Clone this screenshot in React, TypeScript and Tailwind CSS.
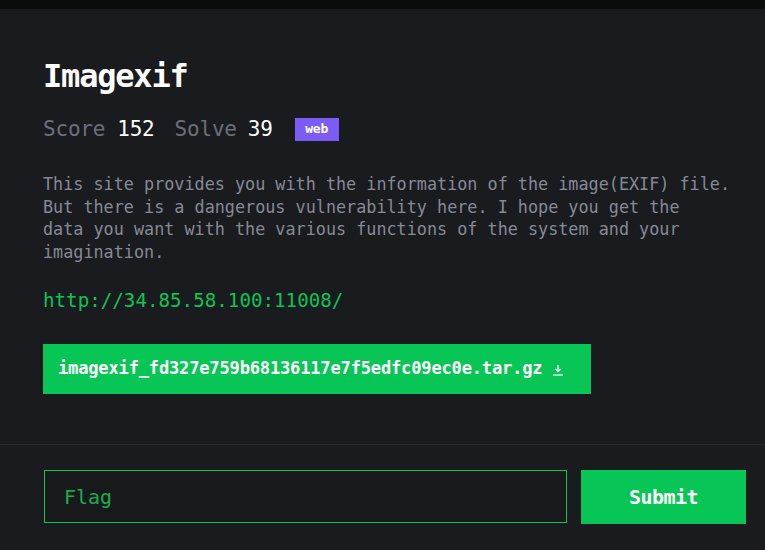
import React from "react";

const mono = { fontFamily: '"DejaVu Sans Mono", "Liberation Mono", monospace' };

const DownloadIcon = () => (
  <svg width="12" height="12" viewBox="0 0 12 12" fill="none" stroke="currentColor" strokeWidth="1.3">
    <path d="M6 1v6.5" />
    <path d="M3.5 5l2.5 2.5L8.5 5" />
    <path d="M1 11h10" />
  </svg>
);

export default function App() {
  const lines = [
    "This site provides you with the information of the image(EXIF) file.",
    "But there is a dangerous vulnerability here. I hope you get the",
    "data you want with the various functions of the system and your",
    "imagination.",
  ];

  return (
    <div className="w-[765px] h-[550px] bg-[#1a1b1e] overflow-hidden" style={mono}>
      <div className="h-[9px] bg-[#0b0b0c]" />
      <div className="px-[43px] pt-[48px] pb-[50px] border-b border-[#2a2b2f]">
        <h1 className="text-[32px] leading-[38px] font-bold text-white tracking-[-1.2px]">Imagexif</h1>
        <div className="mt-[22px] flex items-center h-[24px] text-[21px] leading-[24px] tracking-[-0.2px]">
          <span className="text-[#6c6f79]">Score</span>
          <span className="ml-[12px] text-white">152</span>
          <span className="ml-[20px] text-[#6c6f79]">Solve</span>
          <span className="ml-[11px] text-white">39</span>
          <span className="ml-[22px] w-[44px] h-[23px] bg-[#7b5cf6] text-white text-[13px] font-bold flex items-center justify-center">
            web
          </span>
        </div>
        <p className="mt-[32px] text-[16.8px] leading-[22.5px] text-[#868a96] whitespace-nowrap">
          {lines.map((l) => (
            <span key={l} className="block">
              {l}
            </span>
          ))}
        </p>
        <div className="mt-[26px] text-[19.2px] leading-[24px] text-[#0bc455]">http://34.85.58.100:11008/</div>
        <div className="mt-[31px] w-[548px] h-[50px] bg-[#07c655] flex items-center pl-[15px] text-white">
          <span className="text-[17.1px] font-bold tracking-[-0.2px]">
            imagexif_fd327e759b68136117e7f5edfc09ec0e.tar.gz
          </span>
          <span className="ml-[10px] mt-[2px]">
            <DownloadIcon />
          </span>
        </div>
      </div>
      <div className="pl-[44px] pr-[19px] pt-[25px] flex gap-[14px]">
        <input
          placeholder="Flag"
          className="w-[523px] h-[53px] bg-[#18191b] border border-[#0bc455] px-[19px] text-[20px] text-[#0bc455] placeholder:text-[#14b04f] outline-none"
          style={mono}
        />
        <button
          className="w-[165px] h-[54px] bg-[#07c655] text-white text-[20px] font-bold tracking-[-0.5px]"
          style={mono}
        >
          Submit
        </button>
      </div>
    </div>
  );
}
